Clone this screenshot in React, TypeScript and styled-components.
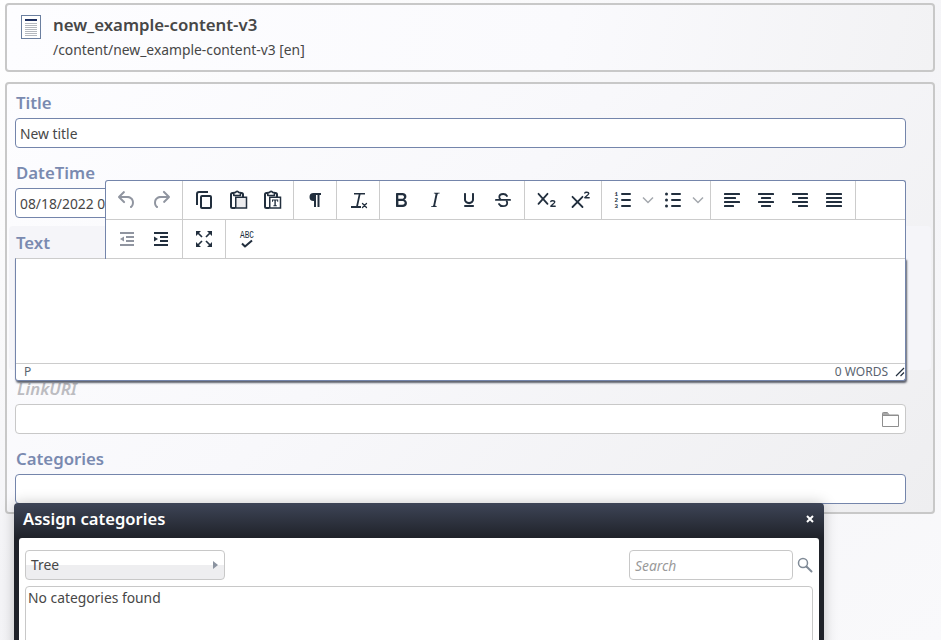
import React from "react"
import styled, { createGlobalStyle } from "styled-components"

const GlobalStyle = createGlobalStyle`
  html, body {
    margin: 0;
    padding: 0;
    height: 100%;
  }
  * {
    box-sizing: border-box;
  }
  body {
    font-family: "Noto Sans", "Open Sans", sans-serif;
    color: #474747;
  }
`

const Page = styled.div`
  position: relative;
  width: 941px;
  height: 640px;
  overflow: hidden;
  padding: 3px 6px 0 5px;
  background: linear-gradient(150deg, #fff 0%, #f4f4f7 50%, #f9f9fb 100%);
`

const InfoBox = styled.div`
  display: flex;
  gap: 12px;
  height: 69px;
  padding: 10px 14px 0;
  border: 2px solid #c8c8c8;
  border-radius: 4px;
  background: linear-gradient(100deg, #fdfdff 0%, #fafafd 60%, #f2f2f4 100%);
`

const InfoText = styled.div`
  display: flex;
  flex-direction: column;
`

const InfoTitle = styled.div`
  margin-top: -2px;
  font-size: 16.8px;
  font-weight: 600;
  line-height: 24px;
  color: #474747;
`

const InfoPath = styled.div`
  margin-top: 1px;
  font-size: 13.85px;
  line-height: 24px;
  color: #474747;
`

const FormPanel = styled.div`
  height: 432px;
  margin-top: 10px;
  padding: 4px 2px 0;
  border: 2px solid #c8c8c8;
  border-radius: 4px;
  background: linear-gradient(135deg, #fdfdff 0%, #f8f8fb 45%, #eeeef0 100%);
`

const Field = styled.div`
  padding: 0 25px 10px 6px;
`

const TextField = styled.div`
  height: 144px;
  margin: -2px 0 4px;
  padding: 2px 25px 0 6px;
  border-radius: 4px;
  background: #f5f5f9;
`

const Label = styled.div<{ $inactive?: boolean }>`
  display: flex;
  align-items: center;
  height: 30px;
  padding: 0 0 2px ${(props) => (props.$inactive ? "2px" : "1px")};
  font-size: 16.8px;
  font-weight: 600;
  font-style: ${(props) => (props.$inactive ? "italic" : "normal")};
  color: ${(props) => (props.$inactive ? "#bcbcc1" : "#7a8ab0")};
`

const InputBox = styled.div<{ $muted?: boolean; $width?: number }>`
  display: flex;
  align-items: center;
  justify-content: space-between;
  width: ${(props) => (props.$width ? `${props.$width}px` : "100%")};
  height: 30px;
  padding: 0 6px 0 4px;
  overflow: hidden;
  white-space: nowrap;
  border: 1px solid ${(props) => (props.$muted ? "#c8c8c8" : "#7485ab")};
  border-radius: 4px;
  background: #fff;
  font-size: 13.85px;
  color: #474747;
`

const EditorSlot = styled.div`
  height: 112px;
`

const Editor = styled.div`
  position: relative;
  z-index: 2;
  display: flex;
  flex-direction: column;
  height: 123px;
  border: 1px solid #7485ab;
  border-top-color: #ccc;
  border-radius: 0 0 3px 3px;
  background: #fff;
  box-shadow: 1px 2px 2px rgba(40, 45, 60, 0.75);
`

const EditorBody = styled.div`
  flex: 1;
`

const StatusBar = styled.div`
  display: flex;
  align-items: center;
  justify-content: space-between;
  height: 17px;
  padding: 0 0 0 8px;
  border-top: 1px solid #ccc;
  font-size: 12px;
  line-height: 16px;
  color: #5a6470;
`

const StatusRight = styled.div`
  display: flex;
  align-items: center;
  gap: 7px;
`

const Toolbar = styled.div`
  position: absolute;
  left: 89px;
  right: -1px;
  bottom: 100%;
  border: 1px solid #7485ab;
  border-bottom: 0;
  border-radius: 3px 3px 0 0;
  background: #fff;
`

const ToolRow = styled.div`
  display: flex;
  height: 39px;
  border-bottom: 1px solid #ccc;
`

const ToolGroup = styled.div<{ $plain?: boolean }>`
  display: flex;
  align-items: center;
  padding: 0 4px;
  border-right: ${(props) => (props.$plain ? "0" : "1px solid #ccc")};
`

const ToolButton = styled.div<{ $off?: boolean }>`
  display: flex;
  align-items: center;
  justify-content: center;
  width: 34px;
  height: 34px;
  color: ${(props) => (props.$off ? "#9095a0" : "#222f3e")};
`

const Split = styled.div`
  display: flex;
  align-items: center;
  width: 50px;
`

const SplitArrow = styled.div`
  display: flex;
  align-items: center;
  justify-content: center;
  width: 16px;
  color: #a4a8ae;
`

const Dialog = styled.div`
  position: absolute;
  top: 503px;
  left: 14px;
  width: 810px;
  height: 160px;
  padding: 0 5px;
  border-radius: 4px 4px 0 0;
  background: linear-gradient(180deg, #3e4557 0px, #1f2229 35px);
  box-shadow: 0 0 14px rgba(0, 0, 0, 0.22);
  z-index: 3;
`

const DialogHead = styled.div`
  display: flex;
  align-items: center;
  justify-content: space-between;
  height: 35px;
  padding: 0 5px 4px 4px;
  font-size: 16.6px;
  font-weight: 600;
  color: #fff;
`

const DialogBody = styled.div`
  height: 130px;
  padding: 12px 6px 0;
  border-radius: 3px 3px 0 0;
  background: #fff;
`

const DialogTools = styled.div`
  display: flex;
  align-items: center;
  justify-content: space-between;
`

const TreeButton = styled.div`
  display: flex;
  align-items: center;
  justify-content: space-between;
  width: 200px;
  height: 30px;
  padding: 0 6px 2px 5px;
  border: 1px solid #c8c8c8;
  border-radius: 4px;
  background: linear-gradient(180deg, #fff 50%, #eeeef0 50%);
  font-size: 13.85px;
  color: #474747;
`

const TreeArrow = styled.span`
  width: 0;
  height: 0;
  margin-top: 2px;
  border-left: 5px solid #8b93a0;
  border-top: 4px solid transparent;
  border-bottom: 4px solid transparent;
`

const SearchGroup = styled.div`
  display: flex;
  align-items: center;
  gap: 4px;
`

const SearchInput = styled.div`
  display: flex;
  align-items: center;
  width: 164px;
  height: 30px;
  padding: 0 5px;
  border: 1px solid #c8c8c8;
  border-radius: 4px;
  background: #fff;
  font-size: 13.85px;
  font-style: italic;
  color: #9a9a9a;
`

const TreeList = styled.div`
  height: 90px;
  margin-top: 6px;
  padding: 0 2px;
  border: 1px solid #c8c8c8;
  border-radius: 4px;
  font-size: 13.85px;
  line-height: 22px;
  color: #474747;
`

const CloseMark = styled.svg`
  display: block;
`

const Svg = ({ children }: { children: React.ReactNode }) => (
  <svg width="24" height="24" viewBox="0 0 24 24" fill="currentColor">
    {children}
  </svg>
)

const line = { fill: "none", stroke: "currentColor", strokeWidth: 2, strokeLinecap: "round" as const, strokeLinejoin: "round" as const }
const tiny = { fontFamily: "'Liberation Mono', monospace", fontWeight: 700 }

// clipboard outline, the right side stops where the sheet lies on top of it
const ClipBase = () => (
  <>
    <path {...line} strokeLinecap="butt" d="M7.500 5H6.500A1.500 1.500 0 0 0 5 6.500V18.500a1.500 1.500 0 0 0 1.500 1.500H9M14.500 5h1A1.500 1.500 0 0 1 17 6.500V9" />
    <path {...line} strokeWidth="1.600" d="M7.800 7.500V4.500h1.700a1.700 1.700 0 0 1 3.200 0h1.700v3z" />
  </>
)

const lines = (rows: [number, number][]) => rows.map(([x, w], i) => <rect key={i} x={x} y={5 + i * 4} width={w} height="2" rx="0.6" />)

const icons: Record<string, React.ReactNode> = {
  undo: <path d="M6.4 8H12c3.7 0 6.2 2 6.8 5.1.6 2.7-.4 5.6-2.3 6.8a1 1 0 0 1-1-1.8c1.1-.6 1.8-2.7 1.4-4.6-.5-2.1-2.1-3.5-4.9-3.5H6.4l3.3 3.3a1 1 0 1 1-1.4 1.4l-5-5a1 1 0 0 1 0-1.4l5-5a1 1 0 0 1 1.4 1.4L6.4 8z" />,
  redo: <path d="M17.6 10H12c-2.8 0-4.4 1.4-4.9 3.5-.4 2 .3 4 1.4 4.6a1 1 0 1 1-1 1.8c-2-1.2-2.9-4.1-2.3-6.8.6-3 3-5.1 6.8-5.1h5.6l-3.3-3.3a1 1 0 1 1 1.4-1.4l5 5a1 1 0 0 1 0 1.4l-5 5a1 1 0 0 1-1.4-1.4l3.3-3.3z" />,
  copy: <path d="M16 3H7a3 3 0 0 0-3 3v11h2V6a1 1 0 0 1 1-1h9V3zm2 4h-8a2 2 0 0 0-2 2v10c0 1.1.9 2 2 2h8a2 2 0 0 0 2-2V9a2 2 0 0 0-2-2zm0 12h-8V9h8v10z" />,
  paste: (
    <>
      <ClipBase />
      <rect x="9.750" y="9.250" width="10.750" height="10.750" fill="#ececee" stroke="currentColor" strokeWidth="1.500" />
    </>
  ),
  pasteText: (
    <>
      <ClipBase />
      <rect x="9.750" y="9.250" width="10.750" height="10.750" fill="#fff" stroke="currentColor" strokeWidth="1.500" />
      <path d="M12 11.500h6.200v2.200h-1v-1.200h-1.400v4.800h1v1h-3.400v-1h1v-4.800H13v1.200h-1z" />
    </>
  ),
  pilcrow: <path d="M10.500 5H18v2h-1.500v12h-2V7H13v12h-2v-6h-.5a4 4 0 0 1 0-8z" />,
  clear: (
    <>
      <path d="M8 5h11v1.600h-4.500L12 18h-1.800l2.500-11.400H8z" />
      <rect x="5" y="18" width="10" height="2" />
      <path d="M16.500 15.500l4 4m0-4l-4 4" {...line} strokeWidth="1.300" />
    </>
  ),
  bold: <path d="M7.800 19c-.3 0-.5 0-.6-.2l-.2-.5V5.700c0-.2 0-.4.2-.5l.6-.2h5c1.500 0 2.700.3 3.500 1 .7.600 1.100 1.400 1.100 2.500a3 3 0 0 1-.6 1.900c-.4.600-1 1-1.600 1.200.4.100.9.300 1.300.6s.8.700 1 1.200c.3.400.4 1 .4 1.600 0 1.300-.4 2.300-1.300 3-.8.700-2 1-3.700 1H7.800zm5-8.300c.6 0 1.200-.1 1.600-.5.4-.3.6-.7.6-1.300 0-1.100-.8-1.700-2.300-1.700H9.300v3.500h3.400zm.5 6c.7 0 1.300-.1 1.700-.4.4-.4.600-.9.600-1.500s-.2-1-.7-1.400c-.4-.3-1-.4-2-.4H9.400v3.800h4z" />,
  italic: <path d="M16.700 4.700l-.1.900h-.3c-.6 0-1 0-1.400.3-.3.3-.4.600-.5 1.100l-2.100 9.800v.6c0 .5.400.8 1.400.8h.2l-.2.800H8l.2-.8h.2c1.100 0 1.800-.5 2-1.500l2-9.800.1-.5c0-.6-.4-.8-1.400-.8h-.3l.2-.9h5.800z" />,
  underline: <path d="M16 5c.6 0 1 .4 1 1v5.500a4 4 0 0 1-.4 1.800l-1 1.400a5.300 5.300 0 0 1-5.500 1 5 5 0 0 1-1.600-1c-.5-.4-.8-.9-1.100-1.400a4 4 0 0 1-.4-1.800V6c0-.6.400-1 1-1s1 .4 1 1v5.500c0 .3 0 .6.2 1l.6.7a3.300 3.300 0 0 0 2.200.8 3.400 3.400 0 0 0 2.200-.8c.3-.2.400-.5.600-.8l.2-.9V6c0-.6.400-1 1-1zM8 17h8c.6 0 1 .4 1 1s-.4 1-1 1H8a1 1 0 0 1 0-2z" />,
  strike: (
    <>
      <path {...line} strokeWidth="1.800" d="M16 8c-.7-1.300-2-2-3.800-2-2.300 0-3.900 1.200-3.900 3 0 1 .5 1.800 1.300 2.400M8 16c.7 1.400 2.100 2.200 4 2.200 2.500 0 4.200-1.200 4.200-3.200 0-.7-.2-1.300-.5-1.800" />
      <rect x="4" y="11" width="16" height="1.800" rx="0.900" />
    </>
  ),
  sub: (
    <>
      <path {...line} strokeWidth="1.800" d="M4.500 5.800l9 10m0-10l-9 10" />
      <path {...line} strokeWidth="1.400" d="M16.800 13.500c.4-1.100 3.800-1.200 4 .4.100 1.300-2.900 2.700-4 4.300h4.400" />
    </>
  ),
  sup: (
    <>
      <path {...line} strokeWidth="1.800" d="M4.500 8.800l10 10.200m0-10.200l-10 10.200" />
      <path {...line} strokeWidth="1.400" d="M16.800 5c.4-1.100 3.800-1.200 4 .4.100 1.300-2.900 2.700-4 4.300h4.400" />
    </>
  ),
  numlist: (
    <>
      <rect x="10" y="5" width="10" height="2" rx="1" />
      <rect x="10" y="11" width="10" height="2" rx="1" />
      <rect x="10" y="17" width="10" height="2" rx="1" />
      <text x="3.500" y="8" fontSize="6" {...tiny}>1</text>
      <text x="3.500" y="14" fontSize="6" {...tiny}>2</text>
      <text x="3.500" y="20" fontSize="6" {...tiny}>3</text>
    </>
  ),
  bullist: (
    <>
      <rect x="10" y="5" width="10" height="2" rx="1" />
      <rect x="10" y="11" width="10" height="2" rx="1" />
      <rect x="10" y="17" width="10" height="2" rx="1" />
      <circle cx="5.500" cy="6" r="1.500" />
      <circle cx="5.500" cy="12" r="1.500" />
      <circle cx="5.500" cy="18" r="1.500" />
    </>
  ),
  alignLeft: lines([[4, 16], [4, 12], [4, 16], [4, 10]]),
  alignCenter: lines([[4, 16], [7, 10], [4, 16], [7, 10]]),
  alignRight: lines([[4, 16], [10, 10], [4, 16], [10, 10]]),
  justify: lines([[4, 16], [4, 16], [4, 16], [4, 16]]),
  outdent: (
    <>
      <rect x="5" y="5" width="14" height="2" />
      <rect x="11" y="9" width="8" height="2" />
      <rect x="11" y="13" width="8" height="2" />
      <rect x="5" y="17" width="14" height="2" />
      <path d="M9 9.500v5L5 12z" />
    </>
  ),
  indent: (
    <>
      <rect x="5" y="5" width="14" height="2" />
      <rect x="11" y="9" width="8" height="2" />
      <rect x="11" y="13" width="8" height="2" />
      <rect x="5" y="17" width="14" height="2" />
      <path d="M5 9.500v5L9 12z" />
    </>
  ),
  fullscreen: (
    <>
      <path d="M4 4h5L4 9zM20 4v5l-5-5zM4 20v-5l5 5zM20 20h-5l5-5z" />
      <path d="M6 6l4 4M18 6l-4 4M6 18l4-4M18 18l-4-4" stroke="currentColor" strokeWidth="1.700" />
    </>
  ),
  spell: (
    <>
      <text x="5" y="11" fontSize="10" textLength="14" lengthAdjust="spacingAndGlyphs" fontFamily="'Liberation Mono', monospace">ABC</text>
      <path {...line} strokeWidth="2" strokeLinecap="butt" d="M7 16.500l3 3 7-6" />
    </>
  ),
}

type Tool = { icon: string; off?: boolean; split?: boolean }
type Group = Tool[]

const firstRow: Group[] = [
  [{ icon: "undo", off: true }, { icon: "redo", off: true }],
  [{ icon: "copy" }, { icon: "paste" }, { icon: "pasteText" }],
  [{ icon: "pilcrow" }],
  [{ icon: "clear" }],
  [{ icon: "bold" }, { icon: "italic" }, { icon: "underline" }, { icon: "strike" }],
  [{ icon: "sub" }, { icon: "sup" }],
  [{ icon: "numlist", split: true }, { icon: "bullist", split: true }],
  [{ icon: "alignLeft" }, { icon: "alignCenter" }, { icon: "alignRight" }, { icon: "justify" }],
]

const secondRow: Group[] = [
  [{ icon: "outdent", off: true }, { icon: "indent" }],
  [{ icon: "fullscreen" }],
  [{ icon: "spell" }],
]

const ToolItem = ({ tool }: { tool: Tool }) => {
  const button = (
    <ToolButton $off={tool.off}>
      <Svg>{icons[tool.icon]}</Svg>
    </ToolButton>
  )
  if (!tool.split) return button
  return (
    <Split>
      {button}
      <SplitArrow>
        <svg width="12" height="8" viewBox="0 0 12 8">
          <path d="M1 1.500l5 5 5-5" fill="none" stroke="currentColor" strokeWidth="1.500" />
        </svg>
      </SplitArrow>
    </Split>
  )
}

const renderRow = (groups: Group[], lastPlain: boolean) => (
  <ToolRow>
    {groups.map((group, i) => (
      <ToolGroup key={i} $plain={lastPlain && i === groups.length - 1}>
        {group.map((tool) => (
          <ToolItem key={tool.icon} tool={tool} />
        ))}
      </ToolGroup>
    ))}
  </ToolRow>
)

const DocIcon = () => (
  <svg width="20" height="24" viewBox="0 0 20 24" style={{ flex: "none" }}>
    <rect x="0.500" y="0.500" width="19" height="23" fill="#fff" stroke="#6b7f9f" />
    <rect x="4" y="4" width="12" height="2" fill="#1d2f5f" />
    {[8, 10, 12, 14, 16, 18, 20].map((y) => (
      <rect key={y} x="4" y={y} width="12" height="1" fill="#b4b8be" />
    ))}
  </svg>
)

const FolderIcon = () => (
  <svg width="17" height="15" viewBox="0 0 17 15">
    <path d="M.5 3V1.200c0-.4.300-.7.700-.7h4.300l1.500 2.500h9.500v11.500H.5z" fill="#fff" stroke="#8f8f8f" />
    <rect x="1" y="1" width="5" height="2" fill="#a8a8a8" />
    <rect x="1" y="3" width="15" height="1" fill="#8f8f8f" />
  </svg>
)

const SearchIcon = () => (
  <svg width="16" height="16" viewBox="0 0 16 16">
    <circle cx="6" cy="6" r="4.500" fill="none" stroke="#7f8a96" strokeWidth="1.500" />
    <path d="M9.500 9.500l5 5" stroke="#7f8a96" strokeWidth="2" strokeLinecap="round" />
  </svg>
)

const App = () => {
  return (
    <Page>
      <GlobalStyle />
      <InfoBox>
        <DocIcon />
        <InfoText>
          <InfoTitle>new_example-content-v3</InfoTitle>
          <InfoPath>/content/new_example-content-v3 [en]</InfoPath>
        </InfoText>
      </InfoBox>
      <FormPanel>
        <Field>
          <Label>Title</Label>
          <InputBox>New title</InputBox>
        </Field>
        <Field>
          <Label>DateTime</Label>
          <InputBox $width={200}>08/18/2022 05:30 PM</InputBox>
        </Field>
        <TextField>
          <Label>Text</Label>
          <EditorSlot>
            <Editor>
              <Toolbar>
                {renderRow(firstRow, false)}
                {renderRow(secondRow, true)}
              </Toolbar>
              <EditorBody />
              <StatusBar>
                <span>P</span>
                <StatusRight>
                  <span>0 WORDS</span>
                  <svg width="10" height="10" viewBox="0 0 10 10">
                    <path d="M1 9l8-8M5.500 9L9 5.500" stroke="#222f3e" strokeWidth="1.200" fill="none" />
                  </svg>
                </StatusRight>
              </StatusBar>
            </Editor>
          </EditorSlot>
        </TextField>
        <Field>
          <Label $inactive>LinkURI</Label>
          <InputBox $muted>
            <span />
            <FolderIcon />
          </InputBox>
        </Field>
        <Field>
          <Label>Categories</Label>
          <InputBox />
        </Field>
      </FormPanel>
      <Dialog>
        <DialogHead>
          <span>Assign categories</span>
          <CloseMark width="8" height="8" viewBox="0 0 8 8">
            <path d="M1 1l6 6m0-6L1 7" stroke="#fff" strokeWidth="2" />
          </CloseMark>
        </DialogHead>
        <DialogBody>
          <DialogTools>
            <TreeButton>
              <span>Tree</span>
              <TreeArrow />
            </TreeButton>
            <SearchGroup>
              <SearchInput>Search</SearchInput>
              <SearchIcon />
            </SearchGroup>
          </DialogTools>
          <TreeList>No categories found</TreeList>
        </DialogBody>
      </Dialog>
    </Page>
  )
}

export default App
